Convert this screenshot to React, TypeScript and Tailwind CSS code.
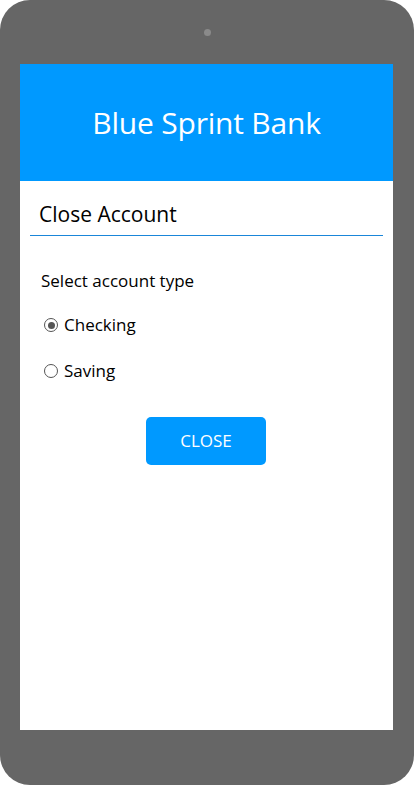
import React from "react";

export default function App() {
  const font = { fontFamily: '"Open Sans", "Noto Sans", sans-serif' };
  return (
    <div className="w-[414px] h-[785px] bg-white" style={font}>
      <div className="w-[414px] h-[785px] bg-[#666666] rounded-[30px] flex flex-col">
        <div className="h-[64px] flex justify-center pt-[29px]">
          <div className="w-[7px] h-[7px] rounded-full bg-[#8a8a8a]" />
        </div>
        <div className="ml-[20px] w-[373px] h-[666px] bg-white flex flex-col">
          <div className="h-[117px] bg-[#0099ff] flex items-center justify-center">
            <span className="text-white text-[30px] tracking-[-0.2px] leading-none">Blue Sprint Bank</span>
          </div>
          <div className="mx-[10px] mt-[21px] pb-[7px] pl-[9px]">
            <span className="text-[21px] text-black leading-[25px]">Close Account</span>
          </div>
          <div className="mx-[10px] h-px bg-[#1a86d9]" />
          <div className="pl-[21px] mt-[34px] text-[17px] text-black leading-[22px]">Select account type</div>
          <div className="pl-[24px] mt-[22px] flex items-center gap-[6px] text-[17px] text-black leading-[22px]">
            <div className="w-[14px] h-[14px] rounded-full border border-[#555] flex items-center justify-center">
              <div className="w-[7px] h-[7px] rounded-full bg-[#555]" />
            </div>
            <span>Checking</span>
          </div>
          <div className="pl-[24px] mt-[24px] flex items-center gap-[6px] text-[17px] text-black leading-[22px]">
            <div className="w-[14px] h-[14px] rounded-full border border-[#555]" />
            <span>Saving</span>
          </div>
          <div className="flex pl-[126px] mt-[35px]">
            <button className="w-[120px] h-[48px] rounded-[5px] bg-[#0099ff] text-white text-[17px]">CLOSE</button>
          </div>
        </div>
      </div>
    </div>
  );
}
